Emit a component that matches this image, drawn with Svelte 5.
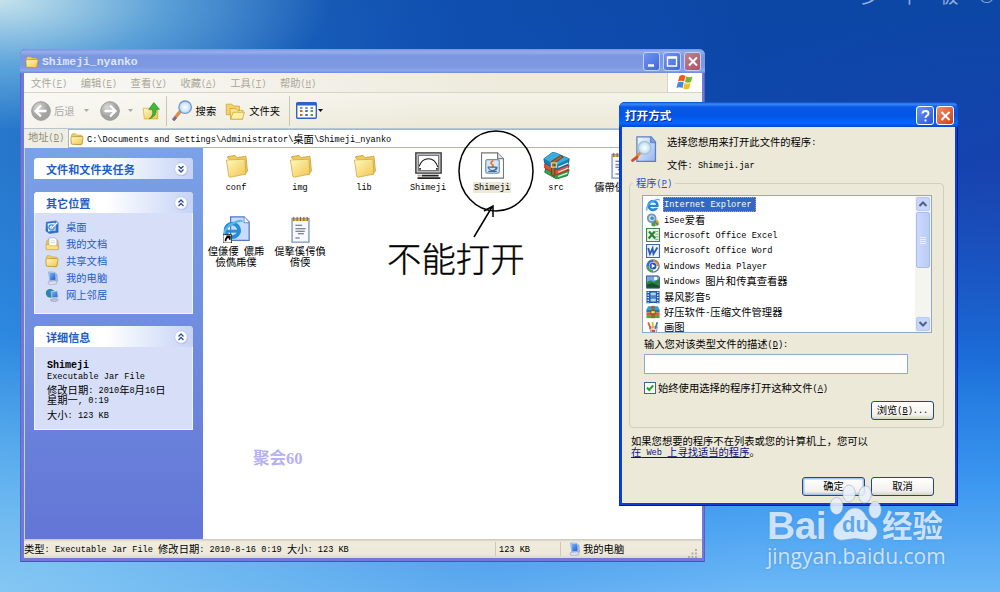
<script>
  const menus = ['文件(&F)', '编辑(&E)', '查看(&V)', '收藏(&A)', '工具(&T)', '帮助(&H)'];
  const places = [
    ['desktop', '桌面'],
    ['docs', '我的文档'],
    ['folder', '共享文档'],
    ['computer', '我的电脑'],
    ['network', '网上邻居']
  ];
  const files = [
    ['folder', ['conf']],
    ['folder', ['img']],
    ['folder', ['lib']],
    ['batch', ['Shimeji']],
    ['jar', ['Shimeji'], true],
    ['rar', ['src']],
    ['note', ['儔帶偍偡偡']],
    ['link', ['偟傔偠 儂乕', '儉儁乕僕']],
    ['note', ['偍撉傒偔偩', '偝偄']]
  ];
  const programs = [
    ['ie', 'Internet Explorer'],
    ['isee', 'iSee爱看'],
    ['excel', 'Microsoft Office Excel'],
    ['word', 'Microsoft Office Word'],
    ['wmp', 'Windows Media Player'],
    ['picture', 'Windows 图片和传真查看器'],
    ['film', '暴风影音5'],
    ['zip', '好压软件-压缩文件管理器'],
    ['paint', '画图']
  ];
  const parts = (s) => s.match(/&[A-Z]|[\x20-\x25\x27-\x7e]+|[^\x20-\x7e]+/g);
</script>

{#snippet t(s)}<span class="t">{#each parts(s) as p}{#if p[0] === '&'}<u class="l">{p[1]}</u>{:else if p.charCodeAt(0) < 127}<span class="l">{p}</span>{:else}{p}{/if}{/each}</span>{/snippet}

{#snippet icon(name, size)}
  <svg class="icon" width={size} height={size} viewBox="0 0 32 32">
    {#if name === 'folder'}
      <path d="M3 8l2-4h8l3 3h10l2 3v17l-3 2-22-2z" fill="#f2cf5c" stroke="#b98c22" />
      <path d="M2 13q0-2 2-2l24-1q2 0 2 2l-3 15q0 2-2 2L5 28q-2 0-2-2z" fill="url(#gFolder)" stroke="#b98c22" stroke-width="1.600" />
    {:else if name === 'bigfolder'}
      <path d="M4 5l10-2 3 3 11-2 2 19-4 5z" fill="#f0cb58" stroke="#c09a38" />
      <path d="M3 9l22-1q2 0 2 2l1 17-20 4q-2 0-2-2z" fill="url(#gFolder)" stroke="#d0a645" />
    {:else if name === 'folders'}
      <path d="M2 5h9l3 3h9v14H2z" fill="#f4d468" stroke="#c09428" />
      <path d="M8 12h9l3 3h9l-1 14H9z" fill="#fbe389" stroke="#c09428" />
      <path d="M9 29l4-11h18l-3 11z" fill="#fff0a5" stroke="#c09428" />
    {:else if name === 'up'}
      <path d="M2 11h9l3 3h14v16H4z" fill="url(#gFolder)" stroke="#c49a2c" />
      <path d="M13 30q9-7 5-17h-6L21 1l10 12h-6q2 12-12 17z" fill="#3ebb34" stroke="#167a16" />
    {:else if name === 'search'}
      <path d="M3 29l10-12" stroke="#e08a48" stroke-width="5" stroke-linecap="round" />
      <path d="M2 31l4-5" stroke="#7366ad" stroke-width="4" />
      <circle cx="20" cy="11" r="9.5" fill="url(#gLens)" stroke="#7197d0" stroke-width="2" />
    {:else if name === 'desktop'}
      <path d="M3 5l22-3 5 4v22l-20 3-8-6z" fill="#2b72c9" stroke="#23579f" />
      <path d="M6 8l18-2v18L7 26z" fill="#e9f5ff" />
      <circle cx="15" cy="17" r="6" fill="none" stroke="#438bcf" stroke-width="3" />
      <path d="M14 18L27 4l3 3-13 13-5 2z" fill="#fff" stroke="#397abd" />
    {:else if name === 'docs'}
      <path d="M4 9l5-4h17l4 5v18H3z" fill="#f3c84e" stroke="#a77c1c" />
      <path d="M9 2h14l4 4v18H9z" fill="#fff" stroke="#7d91b8" />
      <path d="M12 9h11M12 13h11" stroke="#9db4d5" />
      <path d="M2 17h7l3 3h18v9H3z" fill="#ffe27b" stroke="#b0851f" />
    {:else if name === 'computer'}
      <path d="M8 2l15 1 3 19-15 1z" fill="#c2d7f4" stroke="#6687bd" />
      <path d="M10 4l13 1 1 15-12 1z" fill="url(#gScreen)" />
      <path d="M8 24l17-2 2 7-12 3-8-3z" fill="#d9dff0" stroke="#7c89ad" />
      <path d="M24 5l4 1 2 18-3 1z" fill="#9aafd8" />
    {:else if name === 'network'}
      <circle cx="12" cy="12" r="10" fill="#2a9558" />
      <path d="M3 8q4-6 10-6l3 5-6 5 3 5-5 4q-5-5-5-13z" fill="#2d7dda" />
      <path d="M14 8l14-1 2 14-14 2z" fill="url(#gScreen)" stroke="#b6c9e5" stroke-width="2" />
      <path d="M13 26l14-2 3 4-8 4-9-3z" fill="#c2c1d7" stroke="#8582a3" />
    {:else if name === 'batch'}
      <path d="M1 1h30v24H1z" fill="#d0d0d0" stroke="#333" stroke-width="1.6" />
      <path d="M4 4h24v18H4z" fill="#fff" stroke="#777" stroke-width="1.4" />
      <path d="M5 17Q8 8 16 8t11 10" fill="none" stroke="#111" stroke-width="1.2" />
      <path d="M5 20h2M25 20h2M8 28h20M3 31h27" stroke="#222" stroke-width="2" />
      <path d="M3 28h4" stroke="#aaa" stroke-width="2" />
    {:else if name === 'jar'}
      <path d="M3 1h19l7 7v23H3z" fill="#fff" stroke="#777" stroke-width="1.3" />
      <path d="M22 1v7h7" fill="#ddd" stroke="#555" />
      <rect x="8" y="9" width="16" height="16" rx="2" fill="#d7e6f4" stroke="#6e91b7" stroke-width="1.4" />
      <path d="M17 10q-5 3-1 5 2 2-1 3" fill="none" stroke="#e57920" stroke-width="2" />
      <path d="M11 18h9v2q-1 2-4 2t-5-3zm9 0q3 0 0 3M11 23h10" fill="none" stroke="#406d9d" stroke-width="1.4" />
    {:else if name === 'rar'}
      <path d="M3 20l10-4 18 5-2 7-13 4-14-8z" fill="#30a84a" stroke="#17702d" />
      <path d="M2 14l11-3 18 5-2 6-13 5-14-8z" fill="#e2513d" stroke="#9e2a20" />
      <path d="M1 8L12 0l19 8-1 7-14 6L2 13z" fill="#1681bd" stroke="#0c5684" />
      <path d="M1 8L12 0l19 8-15 7z" fill="#3cacdf" />
      <path d="M18 18l12-5M18 24l12-5M18 29l11-4" stroke="#e7eef1" stroke-width="1.4" />
      <path d="M10 11l11-7 3 2-10 7v16l-4-2z" fill="#9d672e" stroke="#60401b" />
      <path d="M10 13h6v5h-6z" fill="none" stroke="#ead07e" stroke-width="1.5" />
    {:else if name === 'note'}
      <path d="M6 3h20v28H6z" fill="#f6f9ff" stroke="#8194ba" stroke-width="1.6" />
      <path d="M7 3h18v3H7z" fill="#e3b13d" />
      <path d="M8 1v5M12 1v5M16 1v5M20 1v5M24 1v5" stroke="#6c5727" />
      <path d="M10 11h8M10 15h12M10 18h11M13 21h7M10 26h5" stroke="#55606e" stroke-width="1.2" />
    {:else if name === 'link'}
      <path d="M9 1h16l6 6v22H9z" fill="#c7dcff" stroke="#5579c1" stroke-width="1.5" />
      <path d="M25 1v7h6" fill="#fff" stroke="#5579c1" />
      <circle cx="11" cy="17" r="8" fill="none" stroke="#258ed7" stroke-width="4.5" />
      <path d="M4 18h17" stroke="#258ed7" stroke-width="3.5" />
      <path d="M1 22Q3 12 13 8t9-1" fill="none" stroke="#56b8ef" stroke-width="2.5" />
      <path d="M0 22h10v10H0z" fill="#fff" stroke="#222" />
      <path d="M3 30q0-5 4-5M4 24h4v4" fill="none" stroke="#000" stroke-width="2" />
    {:else if name === 'find'}
      <path d="M7 1h17l5 6v23H7z" fill="url(#gPage)" stroke="#5a7ec6" stroke-width="1.5" />
      <path d="M23 1v7h6" fill="#739ed9" stroke="#5a7ec6" />
      <circle cx="16" cy="14" r="7.5" fill="url(#gLens)" stroke="#a8c3df" stroke-width="2" />
      <path d="M11 20l-4 4" stroke="#e08b38" stroke-width="3.5" />
      <path d="M7 25l-5 4" stroke="#d44f27" stroke-width="3.5" stroke-linecap="round" />
    {:else if name === 'ie'}
      <circle cx="16" cy="17" r="10" fill="none" stroke="#2187d5" stroke-width="6" />
      <path d="M8 18h19" stroke="#2187d5" stroke-width="5" />
      <path d="M20 22h12" stroke="#fff" stroke-width="2" />
      <path d="M2 29Q0 14 16 7t14-1" fill="none" stroke="#54aeea" stroke-width="3" />
    {:else if name === 'isee'}
      <path d="M17 17l9-2 5 8-8 7-9-3z" fill="#e2aa29" />
      <path d="M12 20h9v10h-8z" fill="#35a45a" />
      <circle cx="13" cy="12" r="9" fill="#b9ddf5" stroke="#7893ac" stroke-width="4" />
      <circle cx="14" cy="12" r="4" fill="#4389bd" />
      <path d="M20 19l8 9" stroke="#527d9b" stroke-width="4" />
    {:else if name === 'excel'}
      <path d="M1 1h30v30H1z" fill="#e8f5e5" stroke="#3c8446" stroke-width="3" />
      <path d="M21 8h7M21 14h7M21 20h7M21 26h7" stroke="#71a673" stroke-width="2" />
      <path d="M7 8l14 16M20 8L6 24" stroke="#288137" stroke-width="5" />
    {:else if name === 'word'}
      <path d="M1 1h30v30H1z" fill="#eef4ff" stroke="#3c66af" stroke-width="3" />
      <path d="M5 9l4 14 6-13 2 13L26 8" fill="none" stroke="#2958b0" stroke-width="4" />
    {:else if name === 'wmp'}
      <circle cx="16" cy="16" r="14" fill="#f6fbff" stroke="#657694" stroke-width="3" />
      <path d="M16 2a14 14 0 0 1 14 14h-5a9 9 0 0 0-9-9z" fill="#e18a27" />
      <path d="M2 16a14 14 0 0 1 14-14v5a9 9 0 0 0-9 9z" fill="#376ccc" />
      <path d="M2 16a14 14 0 0 0 14 14v-5a9 9 0 0 1-9-9z" fill="#46a44c" />
      <circle cx="16" cy="16" r="8" fill="#2857bc" />
      <path d="M13 11l8 5-8 5z" fill="#fff" />
    {:else if name === 'picture'}
      <path d="M1 2h27l3 3v25H1z" fill="#74a6df" stroke="#394f76" stroke-width="2" />
      <path d="M2 17q8-8 15-1l13-7v20H2z" fill="#278538" />
      <path d="M2 22l12-4 16 7v4H2z" fill="#174e30" />
      <circle cx="22" cy="8" r="4" fill="#fff" />
    {:else if name === 'film'}
      <path d="M1 2h9v28H1zM23 2h8v28h-8z" fill="#205da8" />
      <path d="M9 4h15v10H9zM9 18h15v10H9z" fill="#a9d3f8" stroke="#205da8" stroke-width="3" />
      <path d="M5 4v25M27 4v25" stroke="#fff" stroke-width="3" stroke-dasharray="3 3" />
    {:else if name === 'zip'}
      <path d="M5 3h22l4 7H1z" fill="#2ba0da" />
      <path d="M1 10h30v7H1z" fill="#167eaf" />
      <path d="M1 17h30v6H1z" fill="#de5838" />
      <path d="M1 23h30v7H1z" fill="#4aab3a" />
      <path d="M12 2h8v28h-8z" fill="#926c2e" />
      <path d="M11 13h10v7H11z" fill="#efdc89" stroke="#725118" stroke-width="2" />
    {:else if name === 'paint'}
      <path d="M8 14l18-1-3 18H12z" fill="#f2f3f5" stroke="#859198" stroke-width="2" />
      <path d="M11 18L5 3" stroke="#dc5a32" stroke-width="4" />
      <path d="M16 17l-1-15" stroke="#e1b52a" stroke-width="4" />
      <path d="M21 18l5-15" stroke="#3979be" stroke-width="4" />
      <path d="M12 20h9v9h-7z" fill="#df4938" />
    {/if}
  </svg>
{/snippet}

{#snippet chevron(up)}
  <svg class="chev" width="16" height="16" viewBox="0 0 16 16">
    <circle cx="8.4" cy="8.6" r="6.6" fill="#8f9ccc" opacity=".55" />
    <circle cx="8" cy="8" r="6.3" fill="#fff" stroke="#c3cbe8" />
    <path d={up ? 'M5.5 7.5L8 5l2.5 2.5M5.5 11L8 8.5l2.5 2.5' : 'M5.5 5L8 7.5 10.5 5M5.5 8.5L8 11l2.5-2.5'} fill="none" stroke="#2a4fa8" stroke-width="1.3" />
  </svg>
{/snippet}

<svg class="defs" width="0" height="0">
  <defs>
    <linearGradient id="gFolder" x2="1" y2="1"><stop stop-color="#fffbc0" /><stop offset="1" stop-color="#f1c34d" /></linearGradient>
    <linearGradient id="gPage" x2="1" y2="1"><stop stop-color="#f6faff" /><stop offset="1" stop-color="#94b3ee" /></linearGradient>
    <linearGradient id="gScreen" x2="1" y2="1"><stop stop-color="#78baff" /><stop offset="1" stop-color="#1c5ad0" /></linearGradient>
    <radialGradient id="gLens"><stop stop-color="#fff" /><stop offset="1" stop-color="#b5ddf6" /></radialGradient>
    <radialGradient id="gNav" cx=".35" cy=".3"><stop stop-color="#d8d8d6" /><stop offset="1" stop-color="#a2a2a0" /></radialGradient>
  </defs>
</svg>

<div class="screen">
  <div class="wallmark">步 下 极 ©</div>

  <section class="explorer">
    <header class="title">
      {@render icon('folder', 14)}
      <b>{@render t('Shimeji_nyanko')}</b>
      <div class="controls">
        <i><svg width="16" height="17" viewBox="0 0 16 17"><path d="M4 12.5h6" stroke="#fff" stroke-width="2.4" /></svg></i>
        <i><svg width="16" height="17" viewBox="0 0 16 17"><path d="M3.5 4h9v9h-9zM3 5h10" fill="none" stroke="#fff" stroke-width="1.4" /></svg></i>
        <i class="close"><svg width="16" height="17" viewBox="0 0 16 17"><path d="M4 4.5l8 8M12 4.5l-8 8" stroke="#fff" stroke-width="1.9" /></svg></i>
      </div>
    </header>
    <nav class="menu">
      {#each menus as m}<span>{@render t(m)}</span>{/each}
      <div class="flag">
        <svg width="18" height="17" viewBox="0 0 18 17">
          <path d="M3.5 2q3-2 6 0L8 7.500q-3-1.500-6 0z" fill="#ea5a26" />
          <path d="M10.300 2.500q3 1.500 6.200 0L15 8q-3 1.500-6 0z" fill="#79b72c" />
          <path d="M1.800 8.500q3-1.600 6 0L6.500 14q-3-1.700-6 0z" fill="#4487dc" />
          <path d="M8.700 9q3 1.500 6 0l-1.500 5.600q-3 1.500-6 0z" fill="#f5bd25" />
        </svg>
      </div>
    </nav>
    <div class="tools">
      <svg width="20" height="20" viewBox="0 0 20 20"><circle cx="10" cy="10" r="9.300" fill="url(#gNav)" stroke="#999" /><path d="M10 4.500L4.500 10l5.500 5.500M5 10h10.500" fill="none" stroke="#fff" stroke-width="2.300" /></svg>
      <span class="back">{@render t('后退')}</span>
      <svg class="dd" width="5" height="3" viewBox="0 0 5 3"><path d="M0 0h5L2.500 3z" fill="#aaa" /></svg>
      <svg class="fwd" width="20" height="20" viewBox="0 0 20 20"><circle cx="10" cy="10" r="9.300" fill="url(#gNav)" stroke="#999" /><path d="M10 4.500l5.500 5.500-5.500 5.500M15 10H4.500" fill="none" stroke="#fff" stroke-width="2.300" /></svg>
      <svg class="dd two" width="5" height="3" viewBox="0 0 5 3"><path d="M0 0h5L2.500 3z" fill="#aaa" /></svg>
      <span class="upi">{@render icon('up', 18)}</span>
      <hr />
      <span class="find">{@render icon('search', 21)}</span>
      <span class="lab">{@render t('搜索')}</span>
      <span class="fold">{@render icon('folders', 20)}</span>
      <span class="lab2">{@render t('文件夹')}</span>
      <hr />
      <svg class="view" width="21" height="17" viewBox="0 0 21 17">
        <rect x=".7" y=".7" width="19.600" height="15.600" rx="1" fill="#fff" stroke="#2a64c8" stroke-width="1.400" />
        <path d="M1 2h19" stroke="#2a64c8" stroke-width="3" />
        <path d="M4 6h2.500M9.200 6h2.500M14.500 6h2.500" stroke="#7794c4" stroke-width="2" />
        <path d="M4 9h2.500M4 13h2.500" stroke="#d85a3a" stroke-width="2" /><path d="M9.200 9h2.500M9.200 13h2.500" stroke="#3270cc" stroke-width="2" /><path d="M14.500 9h2.500M14.500 13h2.500" stroke="#4ba64b" stroke-width="2" />
      </svg>
      <svg class="dd3" width="5" height="3" viewBox="0 0 5 3"><path d="M0 0h5L2.500 3z" fill="#111" /></svg>
    </div>
    <div class="address">
      <span>{@render t('地址(&D)')}</span>
      <div class="field">{@render icon('folder', 14)}<p>{@render t('C:\\Documents and Settings\\Administrator\\桌面\\Shimeji_nyanko')}</p></div>
    </div>
    <div class="main">
      <aside>
        <div class="box first"><h3>{@render t('文件和文件夹任务')}{@render chevron(false)}</h3></div>
        <div class="box second">
          <h3>{@render t('其它位置')}{@render chevron(true)}</h3>
          <ul>{#each places as p}<li>{@render icon(p[0], 14)}{@render t(p[1])}</li>{/each}</ul>
        </div>
        <div class="box third">
          <h3>{@render t('详细信息')}{@render chevron(true)}</h3>
          <div class="info">
            <b>{@render t('Shimeji')}</b>
            <p>{@render t('Executable Jar File')}</p>
            <p class="gap">{@render t('修改日期: 2010年8月16日')}</p>
            <p>{@render t('星期一, 0:19')}</p>
            <p class="gap">{@render t('大小: 123 KB')}</p>
          </div>
        </div>
      </aside>
      <div class="files">
        {#each files as f}
          <figure>
            {@render icon(f[0] === 'folder' ? 'bigfolder' : f[0], f[0] === 'folder' ? 25 : 27)}
            <figcaption class:sel={f[2]}>{#each f[1] as line}<div>{@render t(line)}</div>{/each}</figcaption>
          </figure>
        {/each}
      </div>
    </div>
    <footer>
      <span class="s1">{@render t('类型: Executable Jar File 修改日期: 2010-8-16 0:19 大小: 123 KB')}</span>
      <span class="s2">{@render t('123 KB')}</span>
      <span class="s3">{@render icon('computer', 14)}{@render t('我的电脑')}</span>
      <svg class="grip" width="10" height="10" viewBox="0 0 10 10"><path d="M8 1v2M8 4.500v2M8 8v2M4.500 4.500v2M4.500 8v2M1 8v2" stroke="#b5b19f" stroke-width="2" /></svg>
    </footer>
  </section>

  <div class="handwritten">不能打开</div>
  <div class="stamp">聚会<span>60</span></div>
  <svg class="marks" width="90" height="120" viewBox="0 0 90 120">
    <ellipse cx="41" cy="46" rx="37" ry="40" fill="none" stroke="#000" stroke-width="1.500" />
    <path d="M19 112L37 82M29 86l9-5 0 11" fill="none" stroke="#000" stroke-width="1.500" />
  </svg>

  <section class="dialog">
    <header>
      <b>{@render t('打开方式')}</b>
      <i class="help"><svg width="17" height="18" viewBox="0 0 17 18"><path d="M5.500 6.500Q5.500 4 8.500 4t3 2.500Q11.500 8 9.500 9q-1 .6-1 2M8.500 12.500v2" fill="none" stroke="#fff" stroke-width="1.900" /></svg></i>
      <i class="shut"><svg width="17" height="18" viewBox="0 0 17 18"><path d="M4.500 5l8 8M12.500 5l-8 8" stroke="#fff" stroke-width="2" /></svg></i>
    </header>
    <div class="body">
      <div class="intro">
        {@render icon('find', 27)}
        <div><p>{@render t('选择您想用来打开此文件的程序:')}</p><p>{@render t('文件: Shimeji.jar')}</p></div>
      </div>
      <fieldset>
        <legend>{@render t('程序(&P)')}</legend>
        <div class="list">
          <ul>{#each programs as p, i}<li>{@render icon(p[0], 14)}<span class="name" class:on={i === 0}>{@render t(p[1])}</span></li>{/each}</ul>
          <div class="scroll">
            <i><svg width="10" height="8" viewBox="0 0 10 8"><path d="M1.500 6L5 2.500 8.500 6" fill="none" stroke="#4d6185" stroke-width="2" /></svg></i>
            <div class="thumb"><s></s><s></s><s></s><s></s></div>
            <i class="down"><svg width="10" height="8" viewBox="0 0 10 8"><path d="M1.500 2L5 5.500 8.500 2" fill="none" stroke="#4d6185" stroke-width="2" /></svg></i>
          </div>
        </div>
        <p class="desc">{@render t('输入您对该类型文件的描述(&D):')}</p>
        <div class="input"></div>
        <div class="check"><svg width="12" height="12" viewBox="0 0 12 12"><rect x=".5" y=".5" width="11" height="11" fill="#fff" stroke="#3c6795" /><path d="M3 5.500l2.200 2.500L9.200 3.300" fill="none" stroke="#21a121" stroke-width="2" /></svg>{@render t('始终使用选择的程序打开这种文件(&A)')}</div>
        <div class="browse"><div class="btn">{@render t('浏览(&B)...')}</div></div>
      </fieldset>
      <p class="hint">{@render t('如果您想要的程序不在列表或您的计算机上，您可以')}</p>
      <p class="hint"><span class="link">{@render t('在 Web 上寻找适当的程序')}</span>。</p>
      <div class="actions"><div class="btn def">{@render t('确定')}</div><div class="btn">{@render t('取消')}</div></div>
    </div>
  </section>

  <div class="watermark">
    <div class="brand">
      <span class="bai">Bai</span>
      <div class="paw">
        <svg width="54" height="58" viewBox="0 0 54 58">
          <g fill="#eaf2fb" stroke="#8fa9c8" stroke-opacity=".6">
            <ellipse cx="8.500" cy="22" rx="6.500" ry="8.500" /><ellipse cx="21" cy="9.500" rx="6.300" ry="8.500" />
            <ellipse cx="37" cy="10.500" rx="6.300" ry="8.500" transform="rotate(8 37 10.500)" /><ellipse cx="47" cy="26" rx="6.300" ry="8.500" />
            <path d="M27 24q7 0 11 8 3 5 8 9 5 6 2 11-3 5-10 4-11-3-22 0-7 1-10-4-2-6 2-11 5-4 8-9 4-8 11-8z" />
          </g>
        </svg>
        <em>du</em>
      </div>
      <span class="jy">经验</span>
    </div>
    <div class="url">jingyan.baidu.com</div>
  </div>
</div>

<style>
  :global(body) { margin: 0; overflow: hidden; }
  p, h3, ul, figure, fieldset { margin: 0; padding: 0; }
  ul { list-style: none; }
  i { font-style: normal; }
  svg { display: block; flex: none; }
  .defs { position: absolute; }
  .screen {
    position: relative; width: 1000px; height: 592px; overflow: hidden;
    font: 10.3px/12px "Noto Sans CJK SC", sans-serif; color: #000; white-space: nowrap;
    background:
      radial-gradient(ellipse 330px 130px at 0 0, rgba(205,232,238,.95), rgba(130,195,230,.6) 50%, transparent),
      radial-gradient(ellipse 420px 200px at 1050px 200px, rgba(50,50,175,.3), transparent),
      radial-gradient(ellipse 500px 260px at 0 592px, rgba(150,208,245,.75), transparent),
      linear-gradient(90deg, rgba(60,160,230,.55), rgba(30,110,210,.2) 45%, transparent 75%),
      linear-gradient(#0c47a5, #0d48ae 28%, #1a70da 60%, #3c98f0 82%, #6cb8f6);
  }
  .t { white-space: pre; }
  .l { font-family: "Liberation Mono", monospace; font-size: 8.6px; line-height: 1; vertical-align: 1px; }
  .wallmark { position: absolute; left: 861px; top: -16px; font: 19px/22px "Noto Sans CJK SC", sans-serif; color: #8faedb; word-spacing: 16px; }

  .explorer {
    position: absolute; left: 20px; top: 49px; width: 685px; height: 513px; box-sizing: border-box;
    display: grid; grid-template-rows: 24px 20px 36px 19px 391px 19px; padding: 0 3px 4px 4px;
    background: #7079d7; border-radius: 6px 6px 0 0; box-shadow: inset 1px 0 #5b66c6, inset -1px 0 #5b62ba, inset 0 -1px #4852bb;
  }
  .title {
    margin: 0 -3px 0 -4px; padding: 1px 4px 0 5px; display: flex; align-items: center; gap: 3px; color: #dce6fa;
    background: linear-gradient(#7d92dd, #94aeed 12%, #7b97e0 28%, #7d99e4 75%, #8aa8ee 90%, #7288d8); border-radius: 6px 6px 0 0;
  }
  .title b .l { font-size: 11.4px; vertical-align: 0; }
  .title b { flex: 1; }
  .controls { display: flex; gap: 3px; }
  .controls i { width: 15.500px; height: 16.500px; border: 1px solid #c3d0f7; border-radius: 3px; background: linear-gradient(135deg, #7396f0, #4067dc); }
  .controls i.close { background: linear-gradient(135deg, #c08292, #a95464); }
  .menu { display: flex; align-items: center; color: #aaa796; background: linear-gradient(90deg, #f8f8f7, #eeebdd 70%); border-bottom: 1px solid #d9d5c3; padding-left: 7px; gap: 13.700px; }
  .flag { margin-left: auto; width: 34px; height: 19px; background: #fff; border-left: 1px solid #d8d4c2; display: grid; place-items: center; }
  .tools { display: flex; align-items: center; padding-left: 7px; background: linear-gradient(90deg, rgba(255,255,255,.5), transparent 60%), linear-gradient(#f4f3ea, #ece9d8); border-bottom: 1px solid #b8c6d4; box-sizing: border-box; }
  .tools hr { width: 1px; height: 30px; margin: 0; border: 0; background: #c9c6b5; }
  .back { margin-left: 3px; color: #aaa; }
  .dd { margin-left: 9px; } .fwd { margin-left: 11px; } .dd.two { margin-left: 8px; }
  .upi { margin: 0 6px 0 9px; } .find { margin-left: 5px; } .lab { margin-left: 3px; } .fold { margin-left: 9px; } .lab2 { margin: 0 9px 0 4px; }
  .view { margin-left: 6px; } .dd3 { margin-left: 1px; }
  .address { display: grid; grid-template-columns: 44px 1fr; background: #f0eee2; color: #8d8a7c; }
  .address > span { padding: 2px 0 0 4px; }
  .field { background: #fff; color: #000; border: 1px solid #9fb8d2; border-right: 0; display: flex; align-items: center; gap: 3px; padding-left: 1px; }
  .main { display: grid; grid-template-columns: 179px 1fr; background: #fff; }
  aside { background: linear-gradient(#7ba2e7, #6375d6); padding: 10px 10px 0; box-shadow: inset 1px 0 #c3d3f5; }
  .box { background: #d6dff7; border-radius: 4px 4px 0 0; box-sizing: border-box; border: 1px solid #eff3fd; border-top: 0; }
  .first { height: 21px; } .second { height: 122px; margin-top: 13px; } .third { height: 104px; margin-top: 12px; }
  h3 { margin: 0 -1px; height: 21px; padding: 0 4px 0 12px; font-size: 11.1px; color: #215dc6; display: flex; align-items: center; justify-content: space-between; background: linear-gradient(90deg, #fff 45%, #c6d3f7); border-radius: 4px 4px 0 0; }
  .second ul { padding: 5px 0 0 10px; color: #215dc6; }
  li { display: flex; align-items: center; }
  .second li { height: 17.200px; gap: 7px; }
  .info { padding: 13px 0 0 12px; line-height: 10.600px; }
  .info b, .info p { display: block; height: 10.600px; line-height: 10.600px; }
  .info .gap { margin-top: 3.600px; }
  .info b .l { font-size: 10px; }
  .files { display: grid; grid-template-columns: repeat(7, 64px); grid-auto-rows: 64px; padding: 4px 0 0 1px; align-content: start; }
  figure { display: flex; flex-direction: column; align-items: center; min-width: 0; }
  figure .icon { height: 27px; }
  figcaption { margin-top: 3px; line-height: 10.500px; text-align: center; padding: 0 1px; }
  figcaption div { height: 10.500px; }
  .sel { background: #ece9d8; }
  footer { display: grid; grid-template-columns: 471px 66px 1fr 14px; align-items: center; background: linear-gradient(#c9c6b6, #efecdf 15%, #ece9d8 80%, #dcd9c6); }
  .s2, .s3 { border-left: 1px solid #cbc8b6; padding-left: 3px; height: 14px; line-height: 14px; }
  .s3 { display: flex; gap: 2px; padding-left: 6px; align-items: center; margin-left: -1px; }
  .grip { align-self: end; }

  .handwritten { position: absolute; left: 387px; top: 235px; font-size: 34.4px; line-height: 44px; font-weight: 300; -webkit-text-stroke: .4px #000; }
  .stamp { position: absolute; left: 253px; top: 447px; font-size: 16.500px; line-height: 21px; font-weight: 700; color: #b6b0f5; }
  .stamp span { font-family: "Liberation Serif", serif; }
  .marks { position: absolute; left: 455px; top: 125px; }

  .dialog {
    position: absolute; left: 619px; top: 102px; width: 339px; height: 404px; box-sizing: border-box;
    display: grid; grid-template-rows: 25px 376px; padding: 0 3px 3px; background: #0a3fdb; border-radius: 6px 6px 0 0;
    box-shadow: inset 1px 0 #0830c0, inset -1px -1px #001590;
  }
  .dialog header {
    margin: 0 -3px; padding: 1px 4px 0 6px; display: flex; align-items: center; gap: 2px; border-radius: 6px 6px 0 0; color: #fff;
    background: linear-gradient(#0846c4, #3a8bf8 8%, #0a58e8 20%, #0355e5 55%, #0368ff 85%, #0346cc);
  }
  .dialog header b { flex: 1; font-size: 11.600px; text-shadow: 1px 1px #0a2f88; }
  .dialog header i { width: 16px; height: 17px; border: 1px solid #fff; border-radius: 3px; background: linear-gradient(135deg, #6a95f5, #2457db); }
  .dialog header i.shut { background: linear-gradient(135deg, #ef9070, #cf3c12); }
  .body { background: #ece9d8; padding: 9px 11px 0 7px; }
  .intro { display: flex; height: 41px; padding-left: 2px; gap: 9px; }
  .intro p { height: 23px; line-height: 11px; }
  fieldset { display: flow-root; box-sizing: border-box; height: 251px; border: 1px solid #d0d0bf; border-radius: 4px; min-width: 0; width: 315px; padding-left: 12px; }
  legend { color: #1d4fd0; padding: 0 3px; margin-left: -9px; height: 12px; line-height: 11px; }
  .list { width: 290px; height: 138px; margin-top: 6px; box-sizing: border-box; border: 1px solid #8eaac8; background: #fff; display: grid; grid-template-columns: 1fr 16px; overflow: hidden; }
  .list ul { height: 136px; overflow: hidden; padding: 1px 0 0 3px; box-sizing: border-box; }
  .list li { height: 15.400px; gap: 3px; }
  .name { padding: 0 1px; height: 15px; line-height: 14px; }
  .on { background: #316ac5; color: #fff; outline: 1px dotted #caa05a; outline-offset: -1px; padding-right: 4px; }
  .scroll { background: #f5f5f0; display: flex; flex-direction: column; padding: 1px 1px; height: 134px; }
  .scroll i { box-sizing: border-box; height: 14px; border-radius: 2px; border: 1px solid #b9c9ef; background: #c8d6fb; display: grid; place-items: center; }
  .scroll .down { margin-top: auto; }
  .thumb { box-sizing: border-box; height: 56px; margin-top: 1px; border: 1px solid #a9bdea; border-radius: 2px; background: linear-gradient(90deg, #cbd9fd, #b9cbf7); display: flex; flex-direction: column; align-items: center; justify-content: center; gap: 1px; }
  .thumb s { width: 6px; height: 1px; background: #edf2ff; }
  .desc { margin: 5px 0 0 2px; height: 12px; }
  .input { margin: 4px 0 0 2px; width: 264px; height: 20px; box-sizing: border-box; background: #fff; border: 1px solid #8eaac8; }
  .check { display: flex; margin: 8px 0 0 2px; gap: 2px; height: 12px; }
  .browse { display: flex; justify-content: end; margin: 7px 9px 0 0; }
  .btn { width: 63px; height: 19px; box-sizing: border-box; border: 1px solid #1d4a80; border-radius: 3px; background: linear-gradient(#fff, #f2f1ec 75%, #d9d4c7); display: flex; align-items: center; justify-content: center; line-height: 10px; padding-bottom: 1px; }
  .def { box-shadow: inset 0 0 0 1.500px #a5c3f0; }
  .hint { margin-left: 2px; height: 10.700px; line-height: 10.700px; }
  fieldset + .hint { margin-top: 8px; }
  .link { color: #10107c; text-decoration: underline; }
  .actions { display: flex; justify-content: end; gap: 6px; margin: 20px 10px 0 0; }

  .watermark { position: absolute; left: 767px; top: 484px; width: 180px; color: #dcebfc; opacity: .88; text-shadow: 0 0 2px rgba(70,120,180,.5); }
  .brand { display: flex; align-items: end; height: 58px; }
  .bai { width: 61px; font: 700 39px/36px "Liberation Sans", sans-serif; letter-spacing: -.5px; margin-bottom: -2px; }
  .paw { position: relative; width: 54px; }
  .paw em { position: absolute; left: 14px; top: 29px; font: 700 22px/24px "Liberation Sans", sans-serif; color: #63a9ea; text-shadow: none; }
  .jy { font-size: 30.500px; line-height: 34px; font-weight: 700; margin-bottom: 1px; }
  .url { font: 21px/28px "Open Sans", sans-serif; }
</style>
